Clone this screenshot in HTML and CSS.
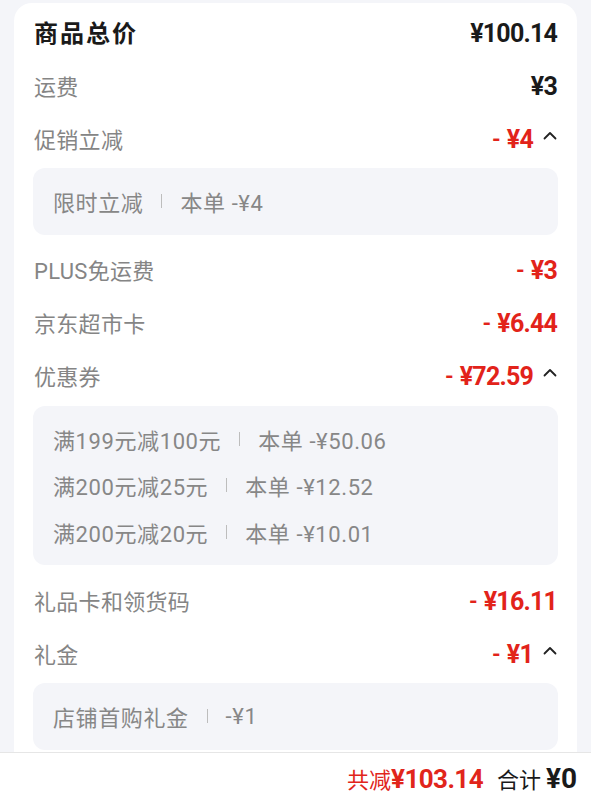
FILE: index.html
```html
<!DOCTYPE html>
<html lang="zh-CN">
    <head>
        <meta charset="utf-8">
        <link rel="stylesheet" href="styles.css">
    </head>
    <body>
        <div class="card">
            <div class="row">
                <span class="title">商品总价</span>
                <span class="val">¥100.14</span>
            </div>
            <div class="row">
                <span class="label">运费</span>
                <span class="val">¥3</span>
            </div>
            <div class="row">
                <span class="label">促销立减</span>
                <span class="val red"><i class="dash">-</i>¥4<svg class="caret" width="14" height="9" viewBox="0 0 14 9"><path d="M1.5 7.5 L7 2 L12.5 7.5" fill="none" stroke="#222" stroke-width="1.8" stroke-linecap="round" stroke-linejoin="round"/></svg></span>
            </div>
            <div class="sub">
                <div class="line">限时立减<span class="sep"></span>本单 -¥4</div>
            </div>
            <div class="row">
                <span class="label">PLUS免运费</span>
                <span class="val red"><i class="dash">-</i>¥3</span>
            </div>
            <div class="row">
                <span class="label">京东超市卡</span>
                <span class="val red"><i class="dash">-</i>¥6.44</span>
            </div>
            <div class="row">
                <span class="label">优惠券</span>
                <span class="val red"><i class="dash">-</i>¥72.59<svg class="caret" width="14" height="9" viewBox="0 0 14 9"><path d="M1.5 7.5 L7 2 L12.5 7.5" fill="none" stroke="#222" stroke-width="1.8" stroke-linecap="round" stroke-linejoin="round"/></svg></span>
            </div>
            <div class="sub">
                <div class="line">满199元减100元<span class="sep"></span>本单 -¥50.06</div>
                <div class="line">满200元减25元<span class="sep"></span>本单 -¥12.52</div>
                <div class="line">满200元减20元<span class="sep"></span>本单 -¥10.01</div>
            </div>
            <div class="row">
                <span class="label">礼品卡和领货码</span>
                <span class="val red"><i class="dash">-</i>¥16.11</span>
            </div>
            <div class="row">
                <span class="label">礼金</span>
                <span class="val red"><i class="dash">-</i>¥1<svg class="caret" width="14" height="9" viewBox="0 0 14 9"><path d="M1.5 7.5 L7 2 L12.5 7.5" fill="none" stroke="#222" stroke-width="1.8" stroke-linecap="round" stroke-linejoin="round"/></svg></span>
            </div>
            <div class="sub">
                <div class="line">店铺首购礼金<span class="sep"></span>-¥1</div>
            </div>
        </div>
        <div class="footer">
            <span class="cut">共减<b>¥103.14</b></span>
            <span class="total">合计 <b>¥0</b></span>
        </div>
    </body>
</html>
```

FILE: styles.css
```css
*{
    margin: 0;
    padding: 0;
    box-sizing: border-box;
}
html, body{
    height: 100%;
    overflow: hidden;
}
body{
    background: #f4f5f9;
    font-family: Roboto, "Noto Sans CJK SC", sans-serif;
    padding: 3px 14px 0;
}
.card{
    background: #fff;
    border-radius: 18px 18px 0 0;
    padding: 2px 20px 0 20px;
    height: 760px;
    overflow: hidden;
}
.row{
    height: 53px;
    display: flex;
    align-items: center;
    justify-content: space-between;
}
.title{
    font-family: "Noto Sans CJK SC", sans-serif;
    font-size: 24px;
    font-weight: bold;
    color: #1a1a1a;
    letter-spacing: 2px;
}
.label{
    font-family: Roboto, "Noto Sans CJK SC", sans-serif;
    font-size: 22px;
    color: #858585;
    letter-spacing: 0.3px;
}
.val{
    display: flex;
    align-items: center;
    font-size: 25px;
    font-weight: bold;
    color: #1a1a1a;
    letter-spacing: -0.8px;
    padding-top: 3px;
}
.red{
    color: #e2231a;
}
.dash{
    font-style: normal;
    margin-right: 7px;
    font-size: 22px;
}
.caret{
    margin-left: 10px;
    margin-top: -8px;
}
.sub{
    background: #f4f5f9;
    border-radius: 12px;
    padding: 10px 20px;
    margin: 4px -1px 8px;
}
.line{
    height: 46.5px;
    display: flex;
    align-items: center;
    font-size: 22px;
    color: #878787;
    letter-spacing: 0.6px;
}
.sep{
    display: inline-block;
    width: 1px;
    height: 14px;
    background: #bdbdbd;
    margin: 0 18px;
}
.footer{
    position: fixed;
    left: 0;
    right: 0;
    bottom: 0;
    height: 48px;
    background: #fff;
    border-top: 1px solid #e6e6e6;
    display: flex;
    align-items: center;
    justify-content: flex-end;
    padding: 3px 14px 0 0;
}
.cut{
    font-family: "Noto Sans CJK SC", sans-serif;
    font-size: 22px;
    color: #e1251b;
    margin-right: 14px;
}
.cut b{
    font-family: Roboto, sans-serif;
    font-size: 26px;
    letter-spacing: -0.6px;
}
.total{
    font-family: "Noto Sans CJK SC", sans-serif;
    font-size: 22px;
    color: #1a1a1a;
}
.total b{
    font-family: Roboto, sans-serif;
    font-size: 28px;
}
```
